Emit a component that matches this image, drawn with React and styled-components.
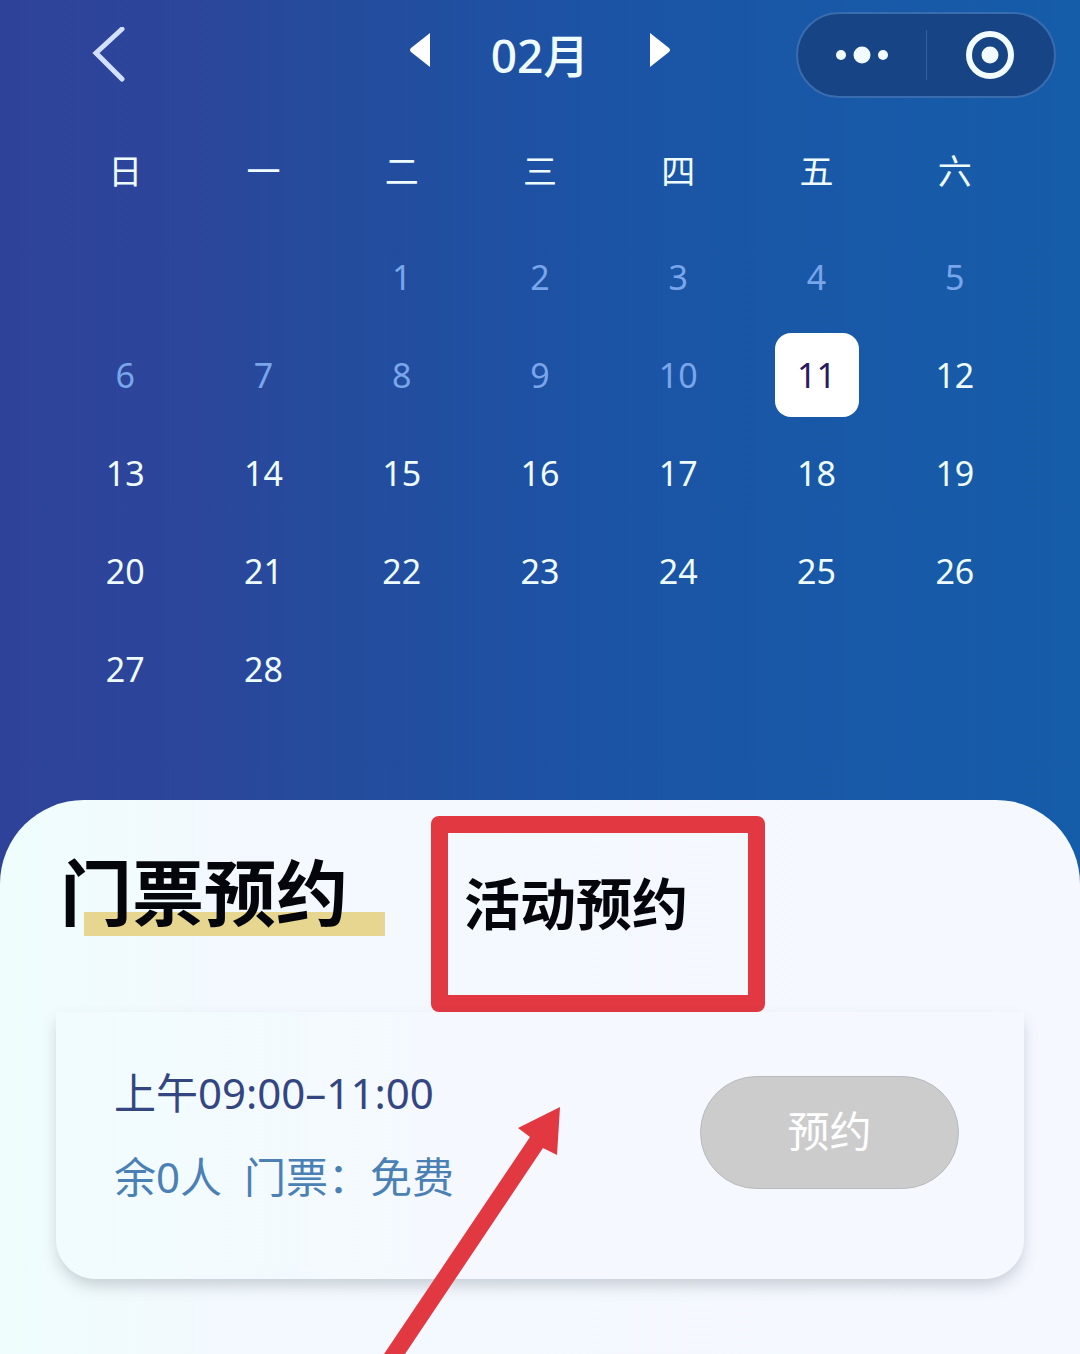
import { useState } from "react";
import styled, { createGlobalStyle } from "styled-components";

const WEEKDAYS = ["日", "一", "二", "三", "四", "五", "六"];
const FIRST_WEEKDAY = 2;
const DAYS = 28;
const TODAY = 11;

const buildWeeks = () => {
    const cells = [
        ...Array(FIRST_WEEKDAY).fill(null),
        ...Array.from({ length: DAYS }, (_, i) => i + 1),
    ];
    while (cells.length % 7 !== 0) cells.push(null);
    const weeks = [];
    for (let i = 0; i < cells.length; i += 7) {
        weeks.push(cells.slice(i, i + 7));
    }
    return weeks;
};

const Header = () => {
    return (
        <Bar>
            <BackButton aria-label="返回">
                <svg width="34" height="56" viewBox="0 0 34 56" fill="none" stroke="#d3e0ff" strokeWidth="5">
                    <path d="M30 2 L4 26 L30 52" strokeLinecap="round" strokeLinejoin="miter" />
                </svg>
            </BackButton>
            <MonthSwitch>
                <IconButton aria-label="上个月">
                    <svg width="20" height="44" viewBox="0 0 20 44">
                        <path d="M20 0 V34 L1 19 Q-1 17 1 15 Z" fill="#fff" />
                    </svg>
                </IconButton>
                <Month>02月</Month>
                <IconButton aria-label="下个月">
                    <svg width="20" height="44" viewBox="0 0 20 44">
                        <path d="M0 0 V34 L19 19 Q21 17 19 15 Z" fill="#fff" />
                    </svg>
                </IconButton>
            </MonthSwitch>
            <Capsule>
                <CapsuleButton aria-label="更多">
                    <svg width="52" height="18" viewBox="0 0 52 18" fill="#f2fbff">
                        <circle cx="5" cy="9" r="5" />
                        <circle cx="26" cy="9" r="8.5" />
                        <circle cx="47" cy="9" r="5" />
                    </svg>
                </CapsuleButton>
                <Divider />
                <CapsuleButton aria-label="关闭">
                    <svg width="50" height="50" viewBox="0 0 50 50">
                        <circle cx="25" cy="25" r="21" fill="none" stroke="#f2fbff" strokeWidth="6" />
                        <circle cx="25" cy="25" r="8.5" fill="#f2fbff" />
                    </svg>
                </CapsuleButton>
            </Capsule>
        </Bar>
    );
};

const Calendar = () => {
    const [selected, setSelected] = useState(TODAY);

    return (
        <CalendarTable>
            <thead>
                <tr>
                    {WEEKDAYS.map((name) => (
                        <Weekday key={name} scope="col">{name}</Weekday>
                    ))}
                </tr>
            </thead>
            <tbody>
                {buildWeeks().map((week, row) => (
                    <tr key={row}>
                        {week.map((day, col) => (
                            <DayCell key={col}>
                                {day && (
                                    <Day
                                        disabled={day < TODAY}
                                        $selected={day === selected}
                                        onClick={() => setSelected(day)}
                                    >
                                        {day}
                                    </Day>
                                )}
                            </DayCell>
                        ))}
                    </tr>
                ))}
            </tbody>
        </CalendarTable>
    );
};

const Slot = () => {
    return (
        <Card>
            <div>
                <Time>上午09:00–11:00</Time>
                <Detail>
                    <span>余0人</span>
                    <span>门票：免费</span>
                </Detail>
            </div>
            <BookButton disabled>预约</BookButton>
            <Arrow viewBox="0 0 176 250" aria-hidden="true">
                <path d="M176 0 L134 21 L146 30 L-2 250 H19 L159 41 L173 48 Z" fill="#e13842" />
            </Arrow>
        </Card>
    );
};

const App = () => {
    return (
        <Page>
            <GlobalStyle />
            <Header />
            <Calendar />
            <Panel>
                <Tabs>
                    <ActiveTab>门票预约</ActiveTab>
                    <Marked>
                        <Tab>活动预约</Tab>
                    </Marked>
                </Tabs>
                <Slot />
            </Panel>
        </Page>
    );
};

export default App;

const GlobalStyle = createGlobalStyle`
* {
    box-sizing: border-box;
}
body {
    margin: 0;
    font-family: "Noto Sans", "Noto Sans CJK SC", sans-serif;
}
button {
    padding: 0;
    border: none;
    background: none;
    color: inherit;
    font: inherit;
    cursor: pointer;
}
svg {
    display: block;
}
`;

const Page = styled.div`
display: flex;
flex-direction: column;
min-height: 100vh;
overflow: hidden;
color: #effcff;
background: linear-gradient(90deg, #2f429a 0%, #2b469b 18%, #244c9d 32%, #1c53a5 55%, #1859a8 80%, #155ca9 100%);
`;

const Bar = styled.header`
display: grid;
grid-template-columns: 1fr 260px 1fr;
align-items: center;
height: 110px;
padding: 0 24px;
`;

const IconButton = styled.button`
justify-self: start;
`;

const BackButton = styled(IconButton)`
margin-left: 68px;
`;

const MonthSwitch = styled.div`
display: flex;
align-items: center;
justify-content: space-between;
`;

const Month = styled.h1`
margin: 0;
font-size: 46px;
font-weight: 500;
line-height: 60px;
`;

const Capsule = styled.div`
display: flex;
align-items: center;
justify-self: end;
width: 260px;
height: 86px;
border: 2px solid #3a6cb0;
border-radius: 43px;
background: #164484;
`;

const CapsuleButton = styled.button`
display: flex;
flex: 1;
align-items: center;
justify-content: center;
`;

const Divider = styled.span`
width: 1px;
height: 50px;
background: #35629f;
`;

const CalendarTable = styled.table`
align-self: stretch;
margin: 0 56px 82px;
border-collapse: collapse;
table-layout: fixed;
`;

const Weekday = styled.th`
height: 118px;
padding: 0;
font-size: 34px;
font-weight: 400;
`;

const DayCell = styled.td`
height: 98px;
padding: 0;
text-align: center;
`;

const Day = styled.button`
width: 84px;
height: 84px;
border-radius: 16px;
font-size: 34px;
line-height: 84px;
color: ${props => (props.$selected ? '#2a1a5e' : props.disabled ? '#79a5ea' : '#effcff')};
background: ${props => (props.$selected ? '#fff' : 'none')};
`;

const Panel = styled.main`
flex: 1;
padding: 16px 56px 72px;
border-radius: 84px 84px 0 0;
color: #04060c;
background: linear-gradient(90deg, #effdfd 0%, #f3f9fe 20%, #f5f8ff 100%);
overflow: hidden;
`;

const Tabs = styled.nav`
display: flex;
align-items: flex-start;
gap: 46px;
`;

const ActiveTab = styled.button`
width: 329px;
height: 104px;
margin-top: 16px;
padding: 16px 0 0 4px;
font-size: 72px;
font-weight: 700;
line-height: 88px;
text-align: left;
background: linear-gradient(#e7d690, #e7d690) 28px 80px / 301px 24px no-repeat;
`;

const Marked = styled.div`
width: 334px;
height: 196px;
padding: 28px 16px;
border: 17px solid #e13842;
border-radius: 8px;
`;

const Tab = styled.button`
font-size: 56px;
font-weight: 700;
line-height: 84px;
`;

const Card = styled.section`
position: relative;
display: flex;
align-items: center;
justify-content: space-between;
height: 267px;
padding: 0 65px 26px 58px;
border-radius: 0 0 40px 40px;
background: linear-gradient(90deg, #f1fcfe 0%, #f5f9ff 40%, #f5f8ff 100%);
box-shadow: 0 8px 16px -2px rgba(90, 100, 110, 0.3);
`;

const Time = styled.p`
margin: 0;
padding: 4px 0 24px;
font-size: 42px;
line-height: 60px;
color: #34467f;
`;

const Detail = styled.p`
display: flex;
gap: 22px;
margin: 0;
font-size: 42px;
line-height: 60px;
color: #4b80b5;
`;

const BookButton = styled.button`
width: 259px;
height: 113px;
padding-bottom: 8px;
border: 1px solid #b6bbc0;
border-radius: 57px;
font-size: 42px;
color: #fff;
background: #cccccc;
`;

/* hand-drawn pointer that lies over the card */
const Arrow = styled.svg`
position: absolute;
top: 95px;
left: 328px;
width: 176px;
height: 250px;
overflow: visible;
`;
